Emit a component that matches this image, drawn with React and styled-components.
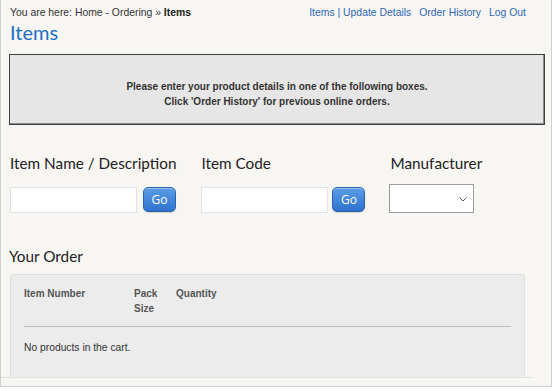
import React from "react";
import styled, { createGlobalStyle } from "styled-components";

const Global = createGlobalStyle`
  html, body { margin: 0; padding: 0; background: #ffffff; }
  body { font-family: "Liberation Sans", Arial, sans-serif; }
  * { box-sizing: border-box; }
`;

const Frame = styled.div`
  width: 552px;
  height: 387px;
  background: #f8f6f3;
  border-left: 1px solid #cfcfcf;
  border-right: 1px solid #cfcfcf;
  border-bottom: 1px solid #cfcfcf;
  overflow: hidden;
  display: flex;
  flex-direction: column;
`;

const Content = styled.div`
  height: 377px;
  overflow: hidden;
  padding: 6px 6px 0 8px;
  flex: none;
`;

const Footer = styled.div`
  width: 532px;
  height: 8px;
  border-top: 1px solid #e2e2e2;
`;

const TopBar = styled.div`
  display: flex;
  justify-content: space-between;
  align-items: flex-start;
  padding-right: 19px;
  font-size: 10.4px;
  line-height: 13px;
`;

const Crumbs = styled.div`
  color: #333;
  padding-left: 1px;
  b { font-weight: bold; color: #222; }
`;

const Links = styled.nav`
  display: flex;
  gap: 8px;
  color: #2f67b3;
  span { white-space: pre; }
`;

const Title = styled.h1`
  margin: 1px 0 0;
  font-family: Lato, "Open Sans", sans-serif;
  font-weight: 400;
  font-size: 20px;
  line-height: 25px;
  color: #1b6fc4;
  padding-left: 1px;
`;

const Notice = styled.div`
  margin-top: 9px;
  height: 71px;
  border: 1px solid #3f3f3f;
  box-shadow: inset -1px -1px 0 #8a8a8a;
  background: #e6e6e6;
  padding-top: 24px;
  text-align: center;
  font-size: 10px;
  font-weight: bold;
  line-height: 15px;
  color: #333;
`;

const SearchRow = styled.div`
  display: flex;
  gap: 24px;
  margin-top: 29px;
`;

const Field = styled.div`
  display: flex;
  flex-direction: column;
`;

const Label = styled.label`
  font-family: Lato, "Open Sans", sans-serif;
  font-size: 15.3px;
  line-height: 19px;
  color: #222;
  padding-left: 1px;
`;

const Controls = styled.div`
  display: flex;
  align-items: flex-end;
  gap: ${(p) => p.$gap || 6}px;
  height: 40px;
`;

const TextInput = styled.input`
  width: 127px;
  height: 26px;
  border: 1px solid #e2e2e2;
  background: #fff;
  margin: 0 0 0 1px;
  padding: 0 4px;
  outline: none;
`;

const GoButton = styled.button`
  width: 33px;
  height: 25px;
  margin-bottom: 1px;
  border: 1px solid #2a63b0;
  border-radius: 5px;
  background: linear-gradient(#5a9de6, #2e72cf);
  box-shadow: inset 0 1px 0 rgba(255,255,255,0.35), 0 1px 1px rgba(0,0,0,0.15);
  color: #fff;
  font-family: "Open Sans", sans-serif;
  font-size: 12px;
  padding: 0;
`;

const SelectBox = styled.div`
  position: relative;
  width: 85px;
  height: 29px;
  border: 1px solid #9c9c9c;
  background: #fff;
  svg { position: absolute; right: 6px; top: 12px; }
`;

const SectionTitle = styled.h2`
  margin: 34px 0 0;
  font-family: Lato, "Open Sans", sans-serif;
  font-weight: 400;
  font-size: 15.3px;
  line-height: 19px;
  color: #222;
`;

const Panel = styled.div`
  margin: 8px 20px 0 1px;
  height: 120px;
  background: #ececec;
  border: 1px solid #dedede;
  border-radius: 4px 4px 0 0;
  padding: 11px 13px 0;
`;

const HeadRow = styled.div`
  display: grid;
  grid-template-columns: 110px 42px 1fr;
  font-size: 10px;
  font-weight: bold;
  line-height: 15px;
  color: #555;
  padding-bottom: 10px;
  border-bottom: 1px solid #bdbdbd;
`;

const PackCol = styled.div`
  width: 30px;
`;

const Empty = styled.div`
  margin-top: 13px;
  font-size: 10.3px;
  line-height: 15px;
  color: #333;
`;

export default function App() {
  return (
    <>
      <Global />
      <Frame>
        <Content>
          <TopBar>
            <Crumbs>
              You are here: Home - Ordering » <b>Items</b>
            </Crumbs>
            <Links>
              <span>Items | Update Details</span>
              <span>Order History</span>
              <span>Log Out</span>
            </Links>
          </TopBar>
          <Title>Items</Title>
          <Notice>
            Please enter your product details in one of the following boxes.
            <br />
            Click 'Order History' for previous online orders.
          </Notice>
          <SearchRow>
            <Field>
              <Label>Item Name / Description</Label>
              <Controls $gap={6}>
                <TextInput />
                <GoButton>Go</GoButton>
              </Controls>
            </Field>
            <Field>
              <Label>Item Code</Label>
              <Controls $gap={4}>
                <TextInput />
                <GoButton>Go</GoButton>
              </Controls>
            </Field>
            <Field>
              <Label>Manufacturer</Label>
              <Controls>
                <SelectBox>
                  <svg width="8" height="5" viewBox="0 0 8 5">
                    <path d="M0.5 0.5 L4 4 L7.5 0.5" fill="none" stroke="#555" strokeWidth="1" />
                  </svg>
                </SelectBox>
              </Controls>
            </Field>
          </SearchRow>
          <SectionTitle>Your Order</SectionTitle>
          <Panel>
            <HeadRow>
              <div>Item Number</div>
              <PackCol>Pack Size</PackCol>
              <div>Quantity</div>
            </HeadRow>
            <Empty>No products in the cart.</Empty>
          </Panel>
        </Content>
        <Footer />
      </Frame>
    </>
  );
}
